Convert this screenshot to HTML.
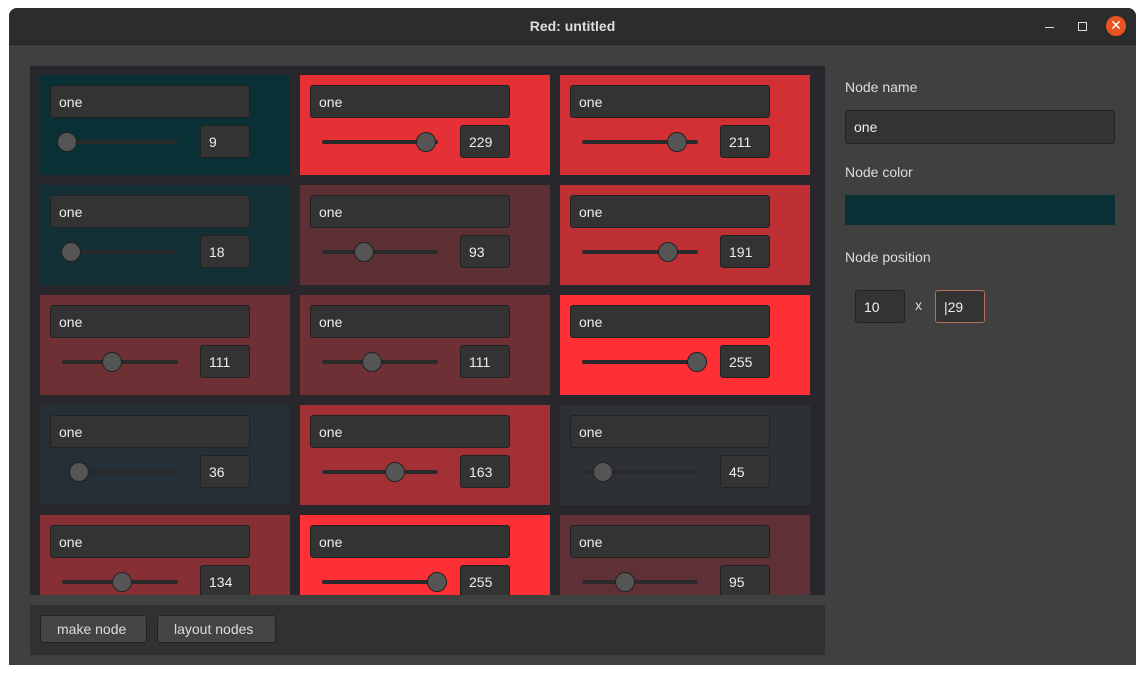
<!DOCTYPE html>
<html><head><meta charset="utf-8"><style>
*{margin:0;padding:0;box-sizing:border-box}
body{width:1145px;height:675px;background:#fff;position:relative;overflow:hidden;font-family:"Liberation Sans","DejaVu Sans",sans-serif;font-size:14px;color:#eee}
.win{position:absolute;left:9px;top:8px;width:1127px;height:657px;background:#404040;border-radius:8px 8px 0 0;overflow:hidden}
.tb{position:absolute;left:0;top:0;width:100%;height:37px;background:#2c2c2c;border-bottom:1px solid #222}
.title{position:absolute;left:0;right:0;top:10px;text-align:center;font-weight:bold;font-size:14px;color:#ddd}
.canvas{position:absolute;left:21px;top:58px;width:795px;height:529px;background:#28272b;overflow:hidden}
.node{position:absolute;width:250px;height:100px}
.name{position:absolute;left:10px;top:10px;width:200px;height:33px;background:#333;border:1px solid #222;border-radius:3px;padding:8px 8px;font-size:14px}
.num{position:absolute;left:160px;top:50px;width:50px;height:33px;background:#333;border:1px solid #222;border-radius:3px;padding:8px 8px;white-space:nowrap}
.track{position:absolute;left:22px;top:65px;width:116px;height:4px;background:#2a2a2a;border-radius:2px}
.th{position:absolute;top:57px;width:20px;height:20px;border-radius:50%;background:#555;border:1px solid #222}
.bar{position:absolute;left:21px;top:597px;width:795px;height:50px;background:#313131}
.btn{position:absolute;top:10px;height:28px;background:#444;border:1px solid #222;border-radius:3px;padding:5px 16px;color:#ddd}
.lbl{position:absolute;left:836px;color:#ddd}
.inp{position:absolute;background:#333;border:1px solid #222;border-radius:3px;padding:8px 8px}
</style></head><body>
<div class="win">
<div class="tb"><div class="title">Red: untitled</div>
<div style="position:absolute;left:1036px;top:19px;width:9px;height:1px;background:#ddd"></div>
<div style="position:absolute;left:1069px;top:14px;width:9px;height:9px;border:1px solid #ddd"></div>
<div style="position:absolute;left:1097px;top:8px;width:20px;height:20px;border-radius:50%;background:#e95420;color:#fff;text-align:center;line-height:19px;font-size:14px">✕</div>
</div>
<div class="canvas">
<div class="node" style="left:10px;top:9px;background:#093035"><div class="name">one</div><div class="track"></div><div class="th" style="left:17px"></div><div class="num">9</div></div>
<div class="node" style="left:270px;top:9px;background:#e53035"><div class="name">one</div><div class="track"></div><div class="th" style="left:116px"></div><div class="num">229</div></div>
<div class="node" style="left:530px;top:9px;background:#d33035"><div class="name">one</div><div class="track"></div><div class="th" style="left:107px"></div><div class="num">211</div></div>
<div class="node" style="left:10px;top:119px;background:#123035"><div class="name">one</div><div class="track"></div><div class="th" style="left:21px"></div><div class="num">18</div></div>
<div class="node" style="left:270px;top:119px;background:#5d3035"><div class="name">one</div><div class="track"></div><div class="th" style="left:54px"></div><div class="num">93</div></div>
<div class="node" style="left:530px;top:119px;background:#bf3035"><div class="name">one</div><div class="track"></div><div class="th" style="left:98px"></div><div class="num">191</div></div>
<div class="node" style="left:10px;top:229px;background:#6f3035"><div class="name">one</div><div class="track"></div><div class="th" style="left:62px"></div><div class="num">111</div></div>
<div class="node" style="left:270px;top:229px;background:#6f3035"><div class="name">one</div><div class="track"></div><div class="th" style="left:62px"></div><div class="num">111</div></div>
<div class="node" style="left:530px;top:229px;background:#ff3035"><div class="name">one</div><div class="track"></div><div class="th" style="left:127px"></div><div class="num">255</div></div>
<div class="node" style="left:10px;top:339px;background:#243035"><div class="name">one</div><div class="track"></div><div class="th" style="left:29px"></div><div class="num">36</div></div>
<div class="node" style="left:270px;top:339px;background:#a33035"><div class="name">one</div><div class="track"></div><div class="th" style="left:85px"></div><div class="num">163</div></div>
<div class="node" style="left:530px;top:339px;background:#2d3035"><div class="name">one</div><div class="track"></div><div class="th" style="left:33px"></div><div class="num">45</div></div>
<div class="node" style="left:10px;top:449px;background:#863035"><div class="name">one</div><div class="track"></div><div class="th" style="left:72px"></div><div class="num">134</div></div>
<div class="node" style="left:270px;top:449px;background:#ff3035"><div class="name">one</div><div class="track"></div><div class="th" style="left:127px"></div><div class="num">255</div></div>
<div class="node" style="left:530px;top:449px;background:#5f3035"><div class="name">one</div><div class="track"></div><div class="th" style="left:55px"></div><div class="num">95</div></div>
</div>
<div class="bar"><div class="btn" style="left:10px;width:107px">make node</div><div class="btn" style="left:127px;width:119px">layout nodes</div></div>
<div class="lbl" style="top:71px">Node name</div>
<div class="inp" style="left:836px;top:102px;width:270px;height:34px">one</div>
<div class="lbl" style="top:156px">Node color</div>
<div style="position:absolute;left:836px;top:187px;width:270px;height:30px;background:#093035"></div>
<div class="lbl" style="top:241px">Node position</div>
<div class="inp" style="left:846px;top:282px;width:50px;height:33px">10</div>
<div style="position:absolute;left:906px;top:289px;color:#ddd">x</div>
<div class="inp" style="left:926px;top:282px;width:50px;height:33px;border:1px solid #b8705a">|29</div>
</div>
</body></html>
